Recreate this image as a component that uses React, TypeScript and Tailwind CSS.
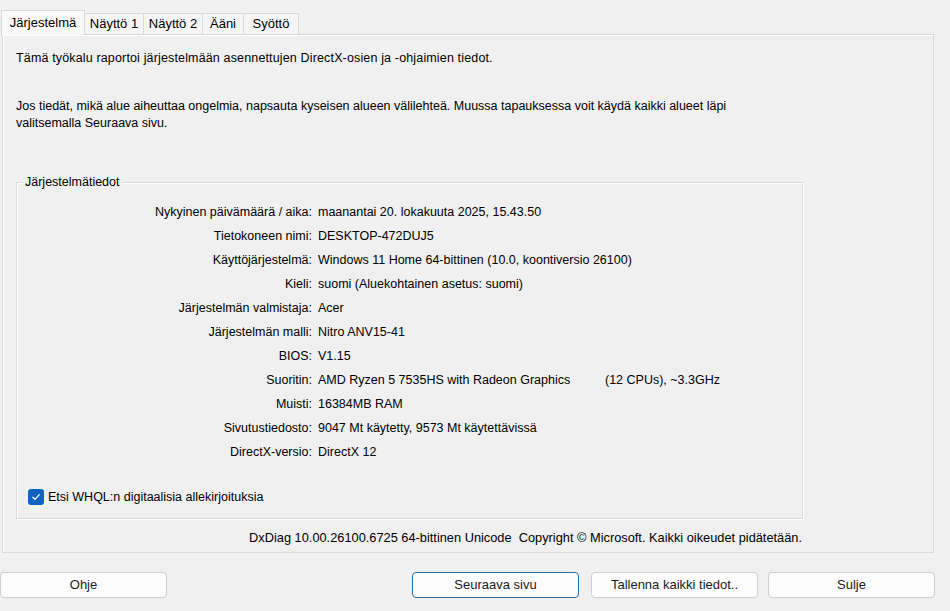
import React from "react";

const rows: { label: string; value: React.ReactNode }[] = [
  { label: "Nykyinen päivämäärä / aika:", value: "maanantai 20. lokakuuta 2025, 15.43.50" },
  { label: "Tietokoneen nimi:", value: "DESKTOP-472DUJ5" },
  { label: "Käyttöjärjestelmä:", value: "Windows 11 Home 64-bittinen (10.0, koontiversio 26100)" },
  { label: "Kieli:", value: "suomi (Aluekohtainen asetus: suomi)" },
  { label: "Järjestelmän valmistaja:", value: "Acer" },
  { label: "Järjestelmän malli:", value: "Nitro ANV15-41" },
  { label: "BIOS:", value: "V1.15" },
  {
    label: "Suoritin:",
    value: (
      <>
        <span className="inline-block w-[287px]">AMD Ryzen 5 7535HS with Radeon Graphics</span>
        <span>(12 CPUs), ~3.3GHz</span>
      </>
    ),
  },
  { label: "Muisti:", value: "16384MB RAM" },
  { label: "Sivutustiedosto:", value: "9047 Mt käytetty, 9573 Mt käytettävissä" },
  { label: "DirectX-versio:", value: "DirectX 12" },
];

const tabs = ["Järjestelmä", "Näyttö 1", "Näyttö 2", "Ääni", "Syöttö"];
const tabWidths = ["w-[84px]", "w-[60px]", "w-[60px]", "w-[42px]", "w-[56px]"];

function Button({ label, primary, className }: { label: string; primary?: boolean; className: string }) {
  return (
    <button
      type="button"
      className={`h-[26px] w-[167px] rounded-[4px] border bg-[#fdfdfd] text-[13px] text-[#1a1a1a] ${
        primary ? "border-[#2b6ca3]" : "border-[#cfcfcf]"
      } ${className}`}
    >
      {label}
    </button>
  );
}

export default function App() {
  return (
    <div
      className="relative h-[611px] w-[950px] overflow-hidden bg-[#f0f0f0] text-black"
      style={{ fontFamily: '"Liberation Sans", Arial, sans-serif' }}
    >
      {/* tab strip */}
      <div className="flex items-end pl-[1px] pt-[10px]">
        {tabs.map((t, i) =>
          i === 0 ? (
            <div
              key={t}
              className={`relative z-10 -mb-px flex h-[25px] items-center justify-center border border-b-0 border-[#d9d9d9] bg-[#f9f9f9] text-[13px] ${tabWidths[i]}`}
            >
              {t}
            </div>
          ) : (
            <div
              key={t}
              className={`-ml-px flex h-[21px] items-center justify-center border border-b-0 border-[#d9d9d9] bg-[#f5f5f5] text-[13px] ${tabWidths[i]}`}
            >
              {t}
            </div>
          ),
        )}
      </div>

      {/* tab panel */}
      <div className="ml-[2px] h-[519px] w-[932px] border border-[#d9d9d9] bg-[#f0f0f0] shadow-[inset_1px_1px_0_#ffffff]">
        <div className="pl-[13px] pt-[15px] text-[12.5px] leading-[17px]">
          <p className="tracking-[0.15px]">Tämä työkalu raportoi järjestelmään asennettujen DirectX-osien ja -ohjaimien tiedot.</p>
          <p className="mt-[31px] w-[770px]">
            Jos tiedät, mikä alue aiheuttaa ongelmia, napsauta kyseisen alueen välilehteä. Muussa tapauksessa voit käydä kaikki alueet läpi
            valitsemalla Seuraava sivu.
          </p>
        </div>

        {/* group box */}
        <div className="relative ml-[13px] mt-[50px] h-[337px] w-[787px] border border-[#dadada] shadow-[inset_1px_1px_0_#ffffff,1px_1px_0_#ffffff]">
          <span className="absolute -top-[9px] left-[6px] bg-[#f0f0f0] px-[2px] text-[12.5px] leading-[17px]">
            Järjestelmätiedot
          </span>
          <div className="pt-[17px] text-[12.5px]">
            {rows.map((r) => (
              <div key={r.label} className="flex h-[24px] items-center">
                <span className="w-[295px] text-right">{r.label}</span>
                <span className="pl-[6px]">{r.value}</span>
              </div>
            ))}
          </div>
          <label className="ml-[11px] mt-[24px] flex items-center gap-[4px] text-[12.5px]">
            <span className="flex h-[16px] w-[16px] items-center justify-center rounded-[3px] bg-[#0f62c0]">
              <svg width="10" height="10" viewBox="0 0 10 10" fill="none">
                <path d="M1.8 5.2 L4 7.3 L8.3 2.6" stroke="#ffffff" strokeWidth="1.2" strokeLinecap="round" strokeLinejoin="round" />
              </svg>
            </span>
            Etsi WHQL:n digitaalisia allekirjoituksia
          </label>
        </div>

        <div className="mt-[10px] w-[799px] text-right text-[12.8px] leading-[17px]">
          DxDiag 10.00.26100.6725 64-bittinen Unicode&nbsp;&nbsp;Copyright © Microsoft. Kaikki oikeudet pidätetään.
        </div>
      </div>

      {/* buttons */}
      <div className="mt-[19px] flex">
        <Button label="Ohje" className="ml-[0px]" />
        <Button label="Seuraava sivu" primary className="ml-[245px]" />
        <Button label="Tallenna kaikki tiedot.." className="ml-[12px]" />
        <Button label="Sulje" className="ml-[10px]" />
      </div>
    </div>
  );
}
